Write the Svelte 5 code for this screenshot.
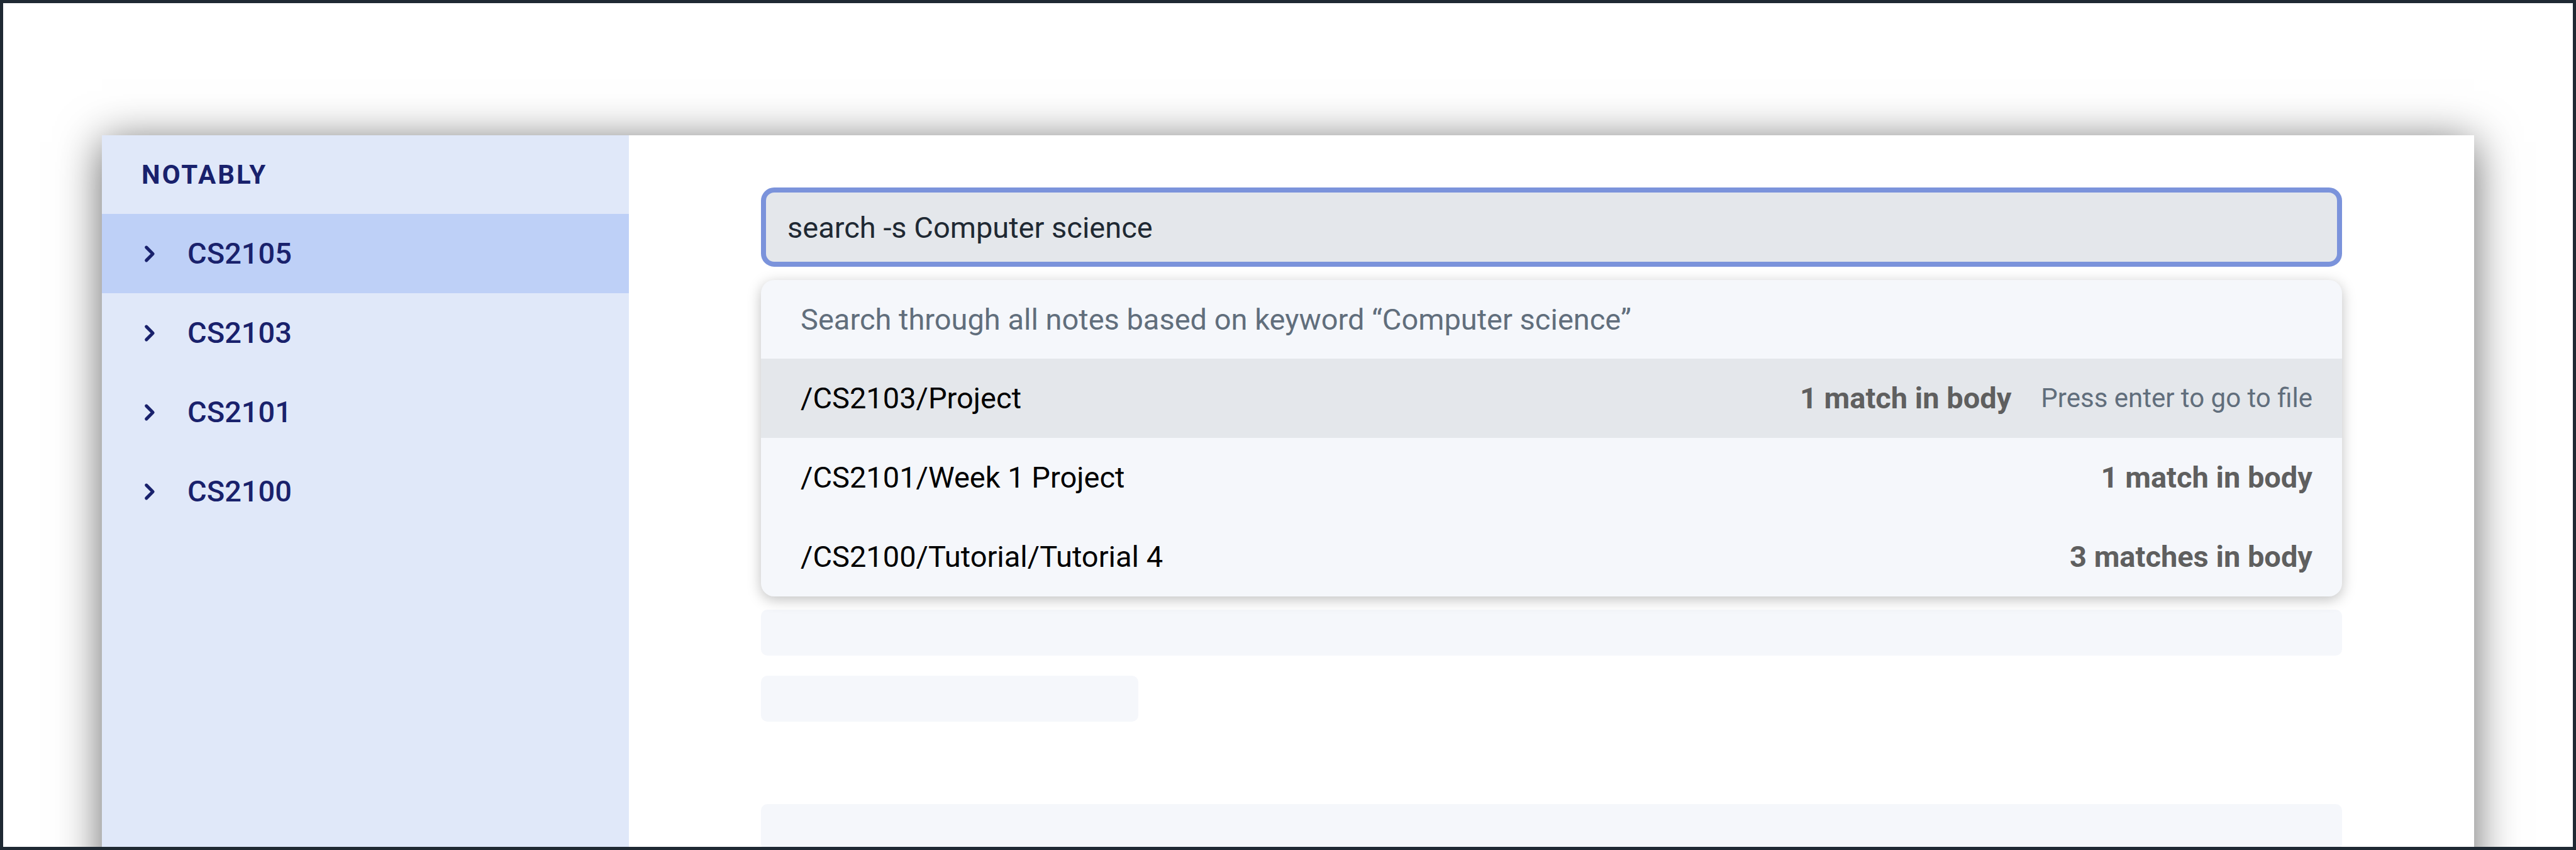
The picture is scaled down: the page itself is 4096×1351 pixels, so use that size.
<script>
  const notes = ['CS2105', 'CS2103', 'CS2101', 'CS2100'];
  let active = $state('CS2105');
  let query = $state('search -s Computer science');

  const results = [
    { path: '/CS2103/Project', matches: '1 match in body' },
    { path: '/CS2101/Week 1 Project', matches: '1 match in body' },
    { path: '/CS2100/Tutorial/Tutorial 4', matches: '3 matches in body' }
  ];
  let selected = $state(0);
</script>

<div class="frame">
  <div class="app">
    <nav class="sidebar" aria-label="Notes">
      <h1>NOTABLY</h1>
      {#each notes as note}
        <button class="note" class:active={note === active} onclick={() => (active = note)}>
          <svg class="chevron" viewBox="0 0 48 48" aria-hidden="true">
            <path d="M12 8 L28 24 L12 40" />
          </svg>
          {note}
        </button>
      {/each}
    </nav>

    <main>
      <input class="command" type="text" aria-label="Command" bind:value={query} />

      <div class="suggestions">
        <p class="summary">Search through all notes based on keyword “Computer science”</p>
        {#each results as result, i}
          <button class="result" class:selected={i === selected} onclick={() => (selected = i)}>
            <span class="path">{result.path}</span>
            <span class="matches">{result.matches}</span>
            {#if i === selected}
              <span class="hint">Press enter to go to file</span>
            {/if}
          </button>
        {/each}
      </div>

      <div class="placeholder">
        <div class="bar"></div>
        <div class="bar short"></div>
      </div>
      <div class="placeholder next">
        <div class="bar"></div>
        <div class="bar"></div>
      </div>
    </main>
  </div>
</div>

<style>
  .frame {
    box-sizing: border-box;
    height: 100vh;
    padding: 210px 157px 0;
    overflow: hidden;
    border: 5px solid #1f2933;
    background: #fff;
    font-family: Roboto, sans-serif;
    font-size: 47px;
    line-height: 54px;
  }

  .app {
    display: flex;
    min-height: 100vh;
    background: #fff;
    box-shadow: 0 10px 66px rgba(0, 0, 0, 0.6);
  }

  .sidebar {
    flex: 0 0 838px;
    background: #e0e8f9;
    color: #19216c;
  }

  h1 {
    margin: 0;
    padding: 0 63px;
    font-size: 42px;
    font-weight: 700;
    line-height: 125px;
    letter-spacing: 3px;
  }

  button {
    display: flex;
    align-items: center;
    width: 100%;
    height: 126px;
    margin: 0;
    border: 0;
    background: none;
    font: inherit;
    text-align: left;
    cursor: pointer;
  }

  .note {
    gap: 42px;
    padding: 0 63px;
    color: inherit;
    font-weight: 500;
  }

  .note.active {
    background: #bed0f7;
  }

  .chevron {
    width: 31px;
    height: 31px;
    fill: none;
    stroke: currentColor;
    stroke-width: 8;
    stroke-linecap: round;
    stroke-linejoin: round;
  }

  main {
    flex: 1;
    min-width: 0;
    padding: 83px 210px 0;
  }

  .command {
    display: block;
    box-sizing: border-box;
    width: 100%;
    height: 126px;
    margin: 0 0 21px;
    padding: 0 34px;
    border: 8px solid #7b93db;
    border-radius: 21px;
    outline: none;
    background: #e4e7eb;
    color: #1f2933;
    font: inherit;
  }

  .suggestions {
    position: relative;
    margin-bottom: 21px;
    overflow: hidden;
    border-radius: 21px;
    background: #f5f7fb;
    box-shadow: 0 5px 21px rgba(0, 0, 0, 0.25);
  }

  .summary {
    margin: 0;
    padding: 0 63px;
    color: #616e7c;
    line-height: 125px;
  }

  .result {
    gap: 47px;
    padding: 0 47px 0 63px;
    color: #000;
  }

  .result.selected {
    background: #e4e7eb;
  }

  .path {
    flex: 1;
  }

  .matches {
    color: #5f5f5f;
    font-weight: 700;
  }

  .hint {
    color: #616e7c;
    font-size: 42px;
  }

  .placeholder {
    display: grid;
    gap: 32px;
  }

  .placeholder.next {
    margin-top: 131px;
  }

  .bar {
    height: 73px;
    border-radius: 10px;
    background: #f5f7fb;
  }

  .bar.short {
    width: 600px;
  }
</style>
